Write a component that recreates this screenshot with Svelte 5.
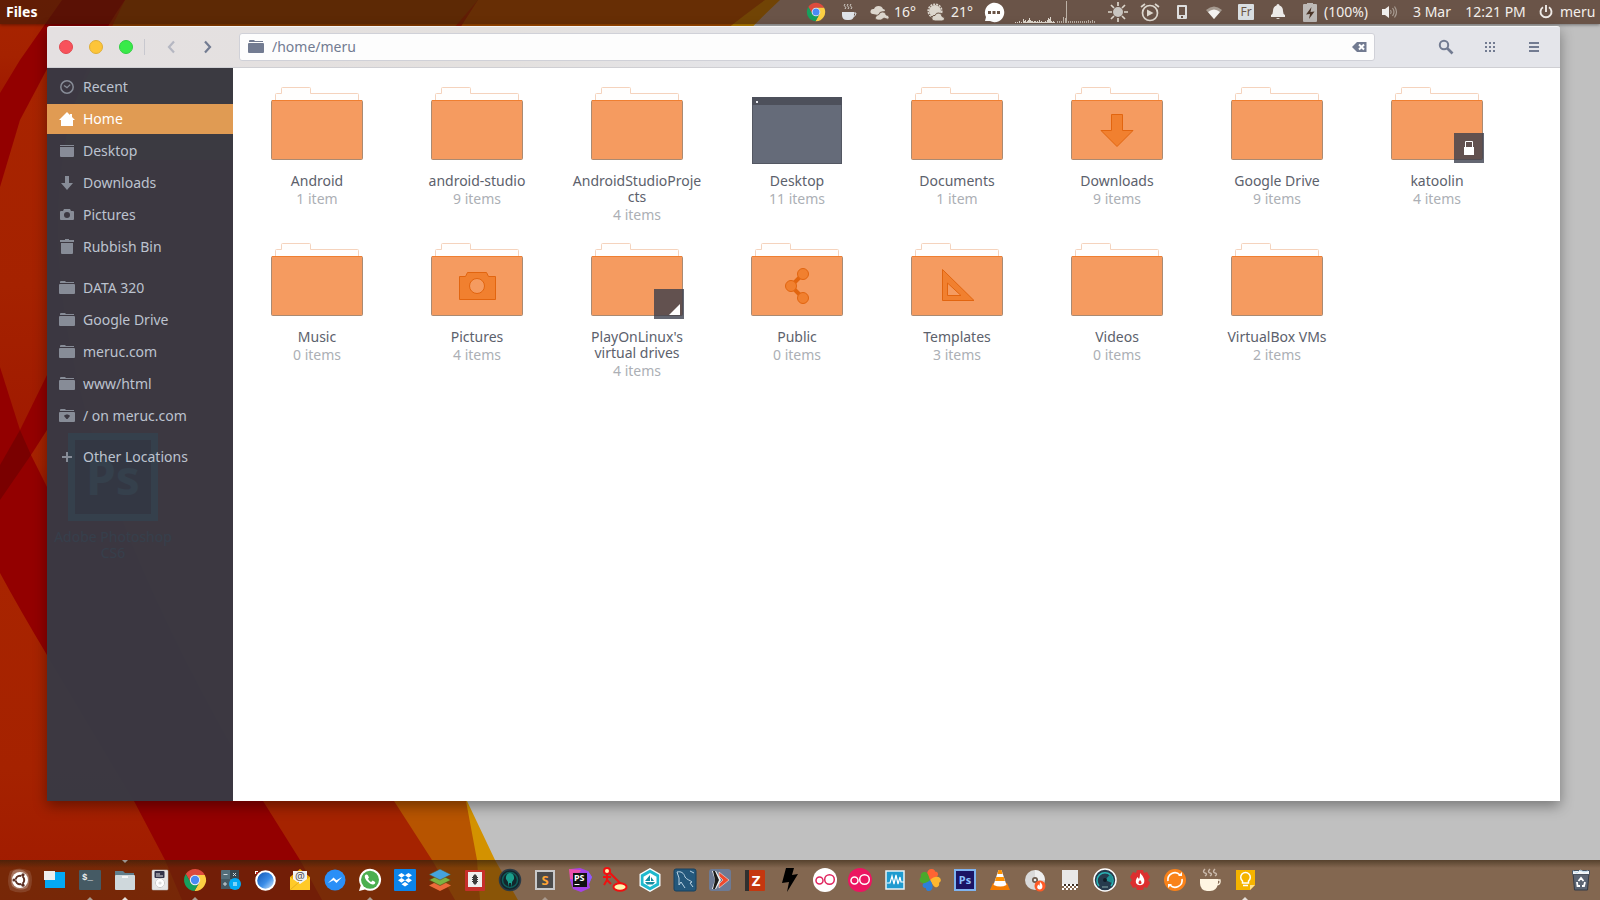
<script>
  const places = [
    [
      { icon: 'recent', label: 'Recent' },
      { icon: 'home', label: 'Home', active: true },
      { icon: 'desktop', label: 'Desktop' },
      { icon: 'download', label: 'Downloads' },
      { icon: 'camera', label: 'Pictures' },
      { icon: 'trash', label: 'Rubbish Bin' }
    ],
    [
      { icon: 'folder', label: 'DATA 320' },
      { icon: 'folder', label: 'Google Drive' },
      { icon: 'folder', label: 'meruc.com' },
      { icon: 'folder', label: 'www/html' },
      { icon: 'remote', label: '/ on meruc.com' }
    ],
    [{ icon: 'plus', label: 'Other Locations' }]
  ];

  const files = [
    { name: 'Android', count: '1 item' },
    { name: 'android-studio', count: '9 items' },
    { name: 'AndroidStudioProjects', count: '4 items' },
    { name: 'Desktop', count: '11 items', kind: 'desktop' },
    { name: 'Documents', count: '1 item' },
    { name: 'Downloads', count: '9 items', kind: 'downloads' },
    { name: 'Google Drive', count: '9 items' },
    { name: 'katoolin', count: '4 items', emblem: 'lock' },
    { name: 'Music', count: '0 items' },
    { name: 'Pictures', count: '4 items', kind: 'pictures' },
    { name: "PlayOnLinux's virtual drives", count: '4 items', emblem: 'link' },
    { name: 'Public', count: '0 items', kind: 'public' },
    { name: 'Templates', count: '3 items', kind: 'templates' },
    { name: 'Videos', count: '0 items' },
    { name: 'VirtualBox VMs', count: '2 items' }
  ];

  const dock = [
    { id: 'ubuntu' }, { id: 'workspaces' }, { id: 'terminal', run: 'idle' }, { id: 'files', run: 'focus' },
    { id: 'ipod' }, { id: 'chrome', run: 'idle' }, { id: 'calculator' }, { id: 'sphere' }, { id: 'mail' },
    { id: 'messenger' }, { id: 'whatsapp', run: 'idle' }, { id: 'dropbox' }, { id: 'layers' }, { id: 'chip' },
    { id: 'kraken' }, { id: 'sublime', run: 'idle' }, { id: 'phpstorm' }, { id: 'stickman' }, { id: 'hexagon' },
    { id: 'mysql' }, { id: 'play' }, { id: 'zotero' }, { id: 'bolt' }, { id: 'flickr' }, { id: 'flickrpink' },
    { id: 'monitor' }, { id: 'pinwheel' }, { id: 'photoshop' }, { id: 'vlc' }, { id: 'burner' },
    { id: 'shredder' }, { id: 'gauge' }, { id: 'firegear' }, { id: 'updater' }, { id: 'coffee' },
    { id: 'keep', run: 'full' }
  ];

  const load = [1, 0, 1, 0, 2, 0, 1, 0, 4, 2, 3, 1, 2, 3, 5, 3, 2, 2, 1, 2, 2, 1, 2, 1, 3, 1, 2, 1, 1, 1, 2, 1, 3, 5, 4, 6, 2, 1, 2, 1,
    0, 0, 2, 0, 2, 0, 2, 0, 6, 0, 5, 22, 0, 2, 0, 2, 0, 2, 0, 2, 0, 2, 0, 2, 0, 2, 0, 2, 0, 2, 0, 2, 0, 3, 0, 2, 0, 3, 0, 2];

  let path = $state('/home/meru');
</script>

{#snippet chrome()}
  <path fill="#dd4b3e" d="M2.8 6A11 11 0 0 1 21.8 7H12A5 5 0 0 0 7.7 14.5z" />
  <path fill="#fccf43" d="M21.8 7A11 11 0 0 1 11.4 23L16.3 14.5A5 5 0 0 0 12 7z" />
  <path fill="#17a05d" d="M11.4 23A11 11 0 0 1 2.8 6L7.7 14.5A5 5 0 0 0 16.3 14.5z" />
  <circle cx="12" cy="12" r="5.2" fill="#f4f4f4" /><circle cx="12" cy="12" r="4.2" fill="#4a8af4" />
{/snippet}

{#snippet place(name)}
  <svg class="i16" viewBox="0 0 16 16" fill="currentColor" aria-hidden="true">
    {#if name === 'recent'}
      <circle cx="8" cy="8" r="6.2" fill="none" stroke="currentColor" stroke-width="1.5" />
      <path d="M5 6.5L8 8.6L11.2 5.6" fill="none" stroke="currentColor" stroke-width="1.3" />
    {:else if name === 'home'}
      <path d="M8 1L11 4V3h2v3l3 3h-2v6H2V9H0z" />
    {:else if name === 'desktop'}
      <path d="M1 3V2h14v1zM1 4h14v9a1 1 0 0 1-1 1H2a1 1 0 0 1-1-1z" />
    {:else if name === 'download'}
      <path d="M6 1h4v7h4l-6 7-6-7h4z" />
    {:else if name === 'camera'}
      <path fill-rule="evenodd" d="M5 2h6l1 2h2a1 1 0 0 1 1 1v7a1 1 0 0 1-1 1H2a1 1 0 0 1-1-1V5a1 1 0 0 1 1-1h2zM8 5a3 3 0 1 0 0 6 3 3 0 0 0 0-6z" />
    {:else if name === 'trash'}
      <path d="M1 1h5V0h4v1h5v2H1zM2 4h12v10a1 1 0 0 1-1 1H3a1 1 0 0 1-1-1z" />
    {:else if name === 'plus'}
      <path d="M7 3h2v4h4v2H9v4H7V9H3V7h4z" />
    {:else}
      <path d="M1 2a1 1 0 0 1 1-1h4l1 1h8v1H1z" />
      {#if name === 'remote'}
        <path fill-rule="evenodd" d="M1 4h14a1 1 0 0 1 1 1v8a1 1 0 0 1-1 1H1a1 1 0 0 1-1-1V5a1 1 0 0 1 1-1zM5 8c1-2 5-2 6 0L8.500 11h-1z" />
      {:else}
        <path d="M1 4h14a1 1 0 0 1 1 1v8a1 1 0 0 1-1 1H1a1 1 0 0 1-1-1V5a1 1 0 0 1 1-1z" />
      {/if}
    {/if}
  </svg>
{/snippet}

{#snippet picture(file)}
  <svg class="picture" viewBox="0 0 96 84" aria-hidden="true">
    {#if file.kind === 'desktop'}
      <rect x="3.500" y="13.500" width="89" height="66" fill="#656b79" stroke="#535762" />
      <path d="M3 13h90v8H3z" fill="#4d505b" /><path d="M7 17h2v2H7z" fill="#e6e8ee" />
    {:else}
      <path d="M6.500 17V10.500q0-1 1-1h5V4.500q0-1 1-1h27q1 0 1 1v5h47q1 0 1 1V17" fill="#fffefd" stroke="#f5d3bd" />
      <rect x="2.500" y="16.500" width="91" height="59" rx="1" fill="#f59b60" stroke="#aa8a72" />
      <path d="M3 16.500h90" stroke="#ef7f31" />
      <g fill="#f1802f" stroke="#e2650f">
        {#if file.kind === 'downloads'}
          <path d="M42.500 30.500h11v16h10.500L48 62.500 32 46.500h10.500z" />
        {:else if file.kind === 'pictures'}
          <path d="M30.500 36.500h6l2-4h19l2 4h7v23h-36z" /><circle cx="48" cy="46" r="7.500" fill="#f59b60" />
        {:else if file.kind === 'public'}
          <path d="M54 34L42 46l12 12" fill="none" stroke-width="4" />
          <circle cx="54" cy="34" r="5.500" /><circle cx="42" cy="46" r="5.500" /><circle cx="54" cy="58" r="5.500" />
        {:else if file.kind === 'templates'}
          <path fill-rule="evenodd" d="M33.500 29.500v31h31.500zM38.500 43v12.500H52z" />
        {/if}
      </g>
    {/if}
    {#if file.emblem}
      <path d="M65 49h30v30H65z" fill="#393c4a" fill-opacity=".78" />
      {#if file.emblem === 'lock'}
        <path d="M75 63h10v8H75z" fill="#fff" /><path d="M76.500 63v-5.500h7V63" fill="none" stroke="#fff" />
      {:else}
        <path d="M91 64v11H80z" fill="#fff" />
      {/if}
    {/if}
  </svg>
{/snippet}

{#snippet app(id)}
  <svg class="i24" viewBox="0 0 24 24" aria-hidden="true">
    {#if id === 'ubuntu'}
      <path d="M2 3q9-5 20 0q4 9 0 19q-9 5-20 0q-4-9 0-19z" fill="#fff" opacity=".12" />
      <path d="M5 3q8-4 15 3q3 7-1 14q-8 4-15-2q-3-8 1-15z" fill="#fff" opacity=".25" />
      <circle cx="12" cy="12" r="8" fill="#fff" />
      <circle cx="12" cy="12" r="4.200" fill="none" stroke="#5b3024" stroke-width="2" />
      <path d="M12 12L6 12M12 12l3-6M12 12l3 6" stroke="#fff" stroke-width="1" />
      <circle cx="6" cy="12" r="1.600" fill="#5b3024" /><circle cx="15" cy="6.800" r="1.600" fill="#5b3024" /><circle cx="15" cy="17.200" r="1.600" fill="#5b3024" />
    {:else if id === 'workspaces'}
      <path d="M2 4h20v16H2z" fill="#03a9f4" /><path d="M1 3h11v9H1z" fill="#eee" />
    {:else if id === 'terminal'}
      <rect x="1" y="2" width="22" height="20" rx="1" fill="#455a64" />
      <text x="4" y="12" font-size="9" font-weight="700" fill="#eee" font-family="Liberation Mono, monospace">$_</text>
    {:else if id === 'files'}
      <path d="M2 3h8l2 2h9v5H2z" fill="#607d8b" /><rect x="2" y="7" width="20" height="15" rx="1" fill="#cfd8dc" /><path d="M9 9h6" stroke="#fff" stroke-width="1.500" />
    {:else if id === 'ipod'}
      <rect x="4" y="2" width="16" height="20" rx="1" fill="#e6e6e6" stroke="#bbb" stroke-width=".5" />
      <rect x="6.500" y="3" width="10" height="7" rx="1" fill="#33344a" /><path d="M8 6h4M8 8h7" stroke="#ddd" stroke-width="1" />
      <circle cx="12" cy="15" r="5" fill="#fff" /><circle cx="12" cy="15" r="4.600" fill="none" stroke="#ccc" /><circle cx="12" cy="15" r="1.600" fill="#ddd" />
    {:else if id === 'chrome'}
      {@render chrome()}
    {:else if id === 'calculator'}
      <rect x="3" y="2" width="18" height="19" rx="1" fill="#546e7a" /><path d="M12 2h9v9h-9z" fill="#37474f" /><path d="M3 11h9v10H3z" fill="#455a64" />
      <path d="M5.500 6.500h4M5 16h4M7 14v4M15 5l3 3M18 5l-3 3" stroke="#cfd8dc" /><circle cx="17" cy="16" r="6" fill="#03a9f4" /><path d="M15 15h4M15 17h4" stroke="#fff" />
    {:else if id === 'sphere'}
      <defs><linearGradient id="sph" x1="0" y1="0" x2="1" y2="1"><stop offset="0" stop-color="#0d4fae" /><stop offset=".55" stop-color="#3b8de8" /><stop offset="1" stop-color="#e8f6ff" /></linearGradient></defs>
      <path d="M2 3h3v3H2z" fill="#fff" /><circle cx="12.500" cy="12.500" r="9.300" fill="url(#sph)" stroke="#fff" stroke-width="2" /><path d="M3 4h2v2H3z" fill="#b71c1c" />
    {:else if id === 'mail'}
      <path d="M2 9l10-8 10 8v13H2z" fill="#f0a800" /><path d="M5 3h14v14H5z" fill="#f2f2f2" />
      <text x="12" y="12" font-size="11" text-anchor="middle" fill="#555" font-family="Noto Sans, sans-serif">@</text>
      <path d="M2 9l10 7 10-7v13H2z" fill="#ffca28" /><path d="M2 22l9-8" stroke="#e6b01e" />
    {:else if id === 'messenger'}
      <circle cx="12" cy="12" r="10.500" fill="#2a8ff7" /><path d="M5 15l5.500-5.500 3 2.800L19 9l-5.500 6-3-2.800z" fill="#fff" />
    {:else if id === 'whatsapp'}
      <path d="M1 23l1.700-5.500A11 11 0 1 1 7 21.500z" fill="#fff" /><circle cx="12" cy="11.800" r="9" fill="#4caf50" />
      <path d="M8 6.500c-2 1-1.500 4 1.500 7s6 4 7.500 2c.8-1.200 0-1.800-2.500-3l-1.300 1.500c-1.500-.6-2.600-1.700-3.200-3.200L11 9.500C10 7 9.500 6 8 6.500z" fill="#fff" />
    {:else if id === 'dropbox'}
      <rect x="1" y="1" width="22" height="22" rx="1" fill="#0a84ea" />
      <path d="M8.500 5l3.500 2.300-3.500 2.400L5 7.300zM15.500 5L19 7.300l-3.500 2.400L12 7.300zM8.500 10L12 12.300l-3.500 2.400L5 12.300zM15.500 10l3.500 2.300-3.500 2.400-3.500-2.400zM12 14l3.500 2.200L12 18.500l-3.500-2.300z" fill="#fff" />
    {:else if id === 'layers'}
      <path d="M12 12l11 5.500L12 23 1 17.500z" fill="#ec6a3a" /><path d="M12 6.500L23 12l-11 5.500L1 12z" fill="#7cb342" stroke="#5b3b10" stroke-width=".6" /><path d="M12 1l11 5.500L12 12 1 6.500z" fill="#45a3dd" stroke="#6b4a12" stroke-width=".6" />
    {:else if id === 'chip'}
      <rect x="2" y="2" width="20" height="21" rx="1" fill="#c62f2b" /><path d="M5 4h14v15H5z" fill="#eee" /><path d="M12 6l2 2v7l-2 2-2-2V8z" fill="#3a3a3a" /><path d="M9 9.500h6M9 11.500h6M9 13.500h6" stroke="#3a3a3a" />
    {:else if id === 'kraken'}
      <circle cx="12" cy="12" r="10.500" fill="#13262c" stroke="#2a3a46" stroke-width="1.500" /><circle cx="12" cy="12" r="7.500" fill="none" stroke="#0f5f5b" stroke-width="1.500" />
      <path d="M12 5c-3 0-4.500 3-4 6l2 3v5l1-4h2l1 4v-5l2-3c.5-3-1-6-4-6z" fill="#1a9f8c" />
    {:else if id === 'sublime'}
      <rect x="3" y="3" width="18" height="18" fill="#4b4b4b" stroke="#c9c9c9" stroke-width="2" />
      <text x="12" y="17" font-size="13" font-weight="700" text-anchor="middle" fill="#ffa534" font-family="Noto Sans, sans-serif">S</text>
    {:else if id === 'phpstorm'}
      <path d="M3 1l9-1 8 3 4 6-3 7 1 4-9 4-8-3-3-9z" fill="#a541e8" /><path d="M1 1l12 1-6 10-5-1z" fill="#ee4fae" /><path d="M20 3l4 6-3 7-3-9z" fill="#8b5cff" />
      <path d="M5 5h14v14H5z" fill="#111" /><text x="6" y="13" font-size="9" font-weight="700" fill="#fff" font-family="Noto Sans, sans-serif">PS</text><path d="M6.500 16.500h5" stroke="#fff" />
    {:else if id === 'stickman'}
      <g stroke="#f01010" stroke-width="2" fill="none"><path d="M4 6v6l-3 5M4 12l4 4M0 9h8M6 4l13 13" /><circle cx="4" cy="3" r="3" fill="#fff4b0" /><ellipse cx="17" cy="19" rx="6.500" ry="3.800" fill="#fff4b0" /></g>
    {:else if id === 'hexagon'}
      <path d="M12 0l10.500 6v12L12 24 1.500 18V6z" fill="#fff" /><path d="M12 1.500l9.200 5.200v10.600L12 22.500l-9.200-5.200V6.700z" fill="#1fb9cd" /><path d="M12 5l6.500 3.700v6.600L12 19l-6.500-3.700V8.700z" fill="#fff" /><path d="M12 7v6H7zM13 9l3 4h-3zM7 14h10l-2 2.500H9z" fill="#138ba0" />
    {:else if id === 'mysql'}
      <rect x="1" y="1" width="22" height="22" rx="2" fill="#24587c" stroke="#17405e" />
      <path d="M4 4c4-1 7 1 8 5 2 3 5 3 7 5l-2 1 3 4M4 4l2 6v7l2-3 4 6M17 3l4 2" fill="none" stroke="#b9d2e2" />
    {:else if id === 'play'}
      <rect x="1" y="1" width="22" height="22" rx="3" fill="#6d7a94" /><path d="M4 3h4l5 9-5 9H4l3-9z" fill="#f3f3f3" /><path d="M5 3h2l4 9-4 9H5l2-9z" fill="#1c1c1c" /><path d="M11 4l10 8-10 8v-4l4-4-4-4z" fill="#f04a2c" stroke="#f6e4e0" stroke-width=".6" />
    {:else if id === 'zotero'}
      <rect x="2" y="2" width="20" height="21" rx="1" fill="#c5370f" /><path d="M2 2h4v21H2z" fill="#30302f" />
      <text x="13" y="18" font-size="15" font-weight="700" text-anchor="middle" fill="#fff" font-family="Noto Sans, sans-serif">Z</text>
    {:else if id === 'bolt'}
      <path d="M8 0h8l-2 7 6-1L9 24l2-10-7 1z" fill="#000" />
    {:else if id === 'flickr' || id === 'flickrpink'}
      <circle cx="12" cy="12" r="12" fill={id === 'flickr' ? '#fff' : '#ec1561'} />
      <g fill="none" stroke={id === 'flickr' ? '#e0245e' : '#fff'} stroke-width="1.500"><circle cx="6.500" cy="12.500" r="3.500" /><circle cx="16.500" cy="11.500" r="4.800" /></g>
    {:else if id === 'monitor'}
      <rect x="3" y="3" width="18" height="18" fill="#1e9bd0" stroke="#e6f3f8" stroke-width="1.500" /><path d="M4 15h3l2-7 2 8 2-9 2 9 2-7 1 5h3" fill="none" stroke="#fff" stroke-width="1.200" />
    {:else if id === 'pinwheel'}
      <path d="M12 12C7 8 9 0 14 1q3 .5 3 2.500 3 0 3 3C20 9 15 11 12 12z" fill="#ff6333" /><path d="M12 12c4-4 8-4 10-2 2 3 0 4-1 5 1 3-2 5-4 4s-4-5-5-7z" fill="#fdb62f" /><path d="M12 12c4 5 3 11-1 11-3 0-3-2-3-3-3 0-4-2-3-4s5-3 7-4z" fill="#2d7fd8" /><path d="M12 12c-4 4-9 4-10 1-1-2 0-3 1-4-1-3 1-5 4-5s4 5 5 8z" fill="#4ba92c" />
    {:else if id === 'photoshop'}
      <rect x="2" y="2" width="20" height="20" fill="#1b1464" stroke="#7fb3f0" stroke-width="2" />
      <text x="12" y="16" font-size="11" font-weight="700" text-anchor="middle" fill="#8cc2ff" font-family="Noto Sans, sans-serif">Ps</text>
    {:else if id === 'vlc'}
      <path d="M5 15h14l3 7H2z" fill="#f57c00" /><path d="M10.500 2h3l5 15q-6 3-13 0z" fill="#fff" /><path d="M10.500 2h3l1 4h-5zM8.300 9h7.400l1.300 4H7z" fill="#ff9100" />
    {:else if id === 'burner'}
      <circle cx="12" cy="12" r="10" fill="#dadada" /><path d="M12 2a10 10 0 0 1 10 10H12z" fill="#efefef" /><circle cx="12" cy="12" r="3" fill="#6c5a4c" /><circle cx="12" cy="12" r="1.300" fill="#eee" />
      <circle cx="17" cy="18" r="5.500" fill="#ff5a26" /><path d="M17 14c3 2 3.500 7 0 7.500-4-.5-3-4-1.500-5l1 1.500z" fill="#fff" />
    {:else if id === 'shredder'}
      <path d="M4 2h16v14H4z" fill="#e8e8e8" /><path d="M4 16h2v2H4zM8 16h2v2H8zM12 16h2v2h-2zM16 16h2v2h-2zM6 18h2v2H6zM10 18h2v2h-2zM14 18h2v2h-2zM18 18h2v2h-2zM4 20h2v2H4zM8 20h2v2H8zM12 20h2v2h-2zM16 20h2v2h-2z" fill="#fff" /><path d="M6 16h2v2H6zM10 16h2v2h-2zM14 16h2v2h-2zM18 16h2v2h-2z" fill="#3c3026" />
    {:else if id === 'gauge'}
      <circle cx="12" cy="12" r="11" fill="#263b4d" stroke="#fff" stroke-width="1.500" /><path d="M6 18A8 8 0 1 1 18 18" fill="none" stroke="#2bb3b5" stroke-width="1.600" />
      <path d="M12 12l5.500-6A8 8 0 0 1 19 15z" fill="#1f8f93" /><circle cx="12" cy="12" r="2" fill="#111c26" /><path d="M9 19h6" stroke="#8aa" />
    {:else if id === 'firegear'}
      <path d="M9 2h6l1 3 3-1 3 5-2 3 2 3-3 5-3-1-1 3H9l-1-3-3 1-3-5 2-3-2-3 3-5 3 1z" fill="#dc2f2f" /><path d="M12 5c4 4 5 7 4 10-2 3-6 3-8 0-.7-3 .5-4 1.500-6l1.500 2c1-2 1-4 1-6zM12 12c-2 2-2 4 0 4s2-2 0-4z" fill="#fff" fill-rule="evenodd" />
    {:else if id === 'updater'}
      <circle cx="12" cy="12" r="11" fill="#f98219" /><path d="M5 13a7 7 0 0 1 12-6M19 11a7 7 0 0 1-12 6" fill="none" stroke="#fff" stroke-width="1.700" /><path d="M15 8h4V4zM9 16H5v4z" fill="#fff" />
    {:else if id === 'coffee'}
      <path d="M7 1q-3 3 0 4t0 3M12 1q-3 3 0 4t0 3M17 1q-3 3 0 4t0 3" fill="none" stroke="#c9b8aa" stroke-width="1.400" />
      <path d="M2 11h18v4q-1 8-8 8H9q-7-1-7-8z" fill="#fff6e3" /><path d="M19 12h3q1 5-4 5" fill="none" stroke="#fff6e3" stroke-width="1.300" />
    {:else if id === 'keep'}
      <path d="M3 2h19v15l-5 5H3z" fill="#f5b400" /><path d="M17 22v-5h5z" fill="#ffe08a" />
      <path d="M9.500 15v-2a4.800 4.800 0 1 1 6 0v2zM10 17.500h5" fill="none" stroke="#fff" stroke-width="1.500" />
    {:else if id === 'bin'}
      <path d="M4 5h16l-1.500 17h-13z" fill="#5b6473" stroke="#353b46" /><path d="M3.500 2.500h17v4h-17z" fill="#f2f5f8" stroke="#4b525e" /><path d="M4 3l4 2 3-3 4 2 4-1" stroke="#b9d8ee" fill="none" />
      <path d="M9.500 13l2.500-3 2.500 3M16 14l-1 4h-2M11 18H8.500l-.5-4" fill="none" stroke="#fff" stroke-width="1.800" />
    {/if}
  </svg>
{/snippet}

<div class="screen">
  <svg class="wallpaper" viewBox="0 0 1600 900" preserveAspectRatio="none" aria-hidden="true">
    <defs>
      <linearGradient id="ember" x1="0" y1="0" x2="0" y2="1"><stop offset="0" stop-color="#a82400" /><stop offset=".6" stop-color="#a52200" /><stop offset="1" stop-color="#a01a00" /></linearGradient>
    </defs>
    <path d="M0 0h1600v900H0z" fill="#c0c0c0" />
    <path d="M0 0h780Q430 330 467 801L495 860 518 900H0z" fill="#d39200" />
    <path d="M0 0h765Q300 340 466 801L477 860 480 900H0z" fill="#b75400" />
    <path d="M0 0h478Q200 420 394 801L432 860 455 900H0z" fill="#a52300" />
    <path d="M125 0h353L340 160H47z" fill="#9c4600" />
    <path d="M0 0h125Q-60 260 263 801L300 860 322 900H0z" fill="#930000" />
    <path d="M0 0h62L20 60 0 93z" fill="url(#ember)" />
    <path d="M0 187L20 120 47 69V375L20 430 0 367z" fill="url(#ember)" />
    <path d="M47 430L31 455 47 487z" fill="url(#ember)" />
    <path d="M20 430L31 455 0 500V465z" fill="#7a0000" />
    <path d="M0 573Q20 610 47 655T134 801L165 860 182 900H0z" fill="url(#ember)" />
  </svg>

  <div class="shortcut" aria-hidden="true">
    <span class="logo">Ps</span>
    <span>Adobe Photoshop CS6</span>
  </div>

  <header class="panel">
    <strong class="appname">Files</strong>
    <div class="tray">
      <button class="cell" aria-label="Chrome"><svg class="i20" viewBox="0 0 24 24">{@render chrome()}</svg></button>
      <button class="cell wide" aria-label="Caffeine">
        <svg class="i16" viewBox="0 0 16 16"><path d="M4 0q-1.500 1.500 0 2.500T4 5M7 0q-1.500 1.500 0 2.500T7 5M10 0q-1.500 1.500 0 2.500T10 5" fill="none" stroke="#d8d4ce" /><path d="M1 8h12v3q0 5-5 5H6q-5 0-5-5z" fill="#dfe3e8" /><path d="M13 9h2q0 3-3 4" fill="none" stroke="#dfe3e8" /></svg>
      </button>
      <button class="weather">
        <svg class="i20" viewBox="0 0 20 20" fill="#dcd6cd"><path d="M3 12q-3-.5-2.500-3T4 7q1-3 4.500-3T13 7q2 0 2 2l-5 1-2 3z" /><path d="M8 18q-3 0-2.500-2.500T9 12.500q1-3 4-2.500t3 3q3 0 3 2.500T17 17l-3-1-3 2z" stroke="#685244" stroke-width=".7" /></svg>16°
      </button>
      <button class="weather">
        <svg class="i20" viewBox="0 0 20 20" fill="#dcd6cd"><circle cx="8" cy="9" r="6" /><circle cx="8" cy="9" r="6.800" fill="none" stroke="#dcd6cd" stroke-width="1.600" stroke-dasharray="2 1" /><path d="M8 19q-4-.5-3-3.500T8 13.500q1-3 4-2.500t3 3.500q3 .5 2.500 2.500T15 19z" stroke="#685244" /></svg>21°
      </button>
      <button class="cell chat" aria-label="Messages">
        <svg class="i20" viewBox="0 0 20 20"><path d="M1 19l1-4A9.700 9.700 0 1 1 6 19z" fill="#fff" /><path d="M4 9h3v3H4zM8.500 9h3v3h-3zM13 9h3v3h-3z" fill="#685244" /></svg>
      </button>
      <button class="cell load" aria-label="System load">
        <svg class="graph" viewBox="0 0 80 22" fill="#e0d9cf">{#each load as h, x}<rect {x} y={22 - h} width="1" height={h} opacity={x > 40 ? 0.7 : 1} />{/each}</svg>
      </button>
      <button class="cell" aria-label="Brightness">
        <svg class="i20" viewBox="0 0 20 20"><circle cx="10" cy="10" r="5" fill="#c9c5c0" /><path d="M10 0v4M10 16v4M0 10h4M16 10h4M3 3l3 3M14 14l3 3M17 3l-3 3M6 14l-3 3" stroke="#ddd6cc" stroke-width="1.700" /></svg>
      </button>
      <button class="cell" aria-label="Alarm">
        <svg class="i20" viewBox="0 0 20 20"><circle cx="10" cy="11" r="7.500" fill="none" stroke="#dcd6cd" stroke-width="1.700" /><path d="M7 7.500l6.500 3.500L7 14.500z" fill="#dcd6cd" /><path d="M1 5l4-3M19 5l-4-3" stroke="#dcd6cd" stroke-width="1.700" /></svg>
      </button>
      <button class="cell" aria-label="Phone">
        <svg class="i16" viewBox="0 0 16 16"><path fill-rule="evenodd" d="M4 1h8a1 1 0 0 1 1 1v12a1 1 0 0 1-1 1H4a1 1 0 0 1-1-1V2a1 1 0 0 1 1-1zM5 3v8h6V3zM7 12v2h2v-2z" fill="#dedede" /></svg>
      </button>
      <button class="cell" aria-label="Wi-Fi">
        <svg class="i16" viewBox="0 0 16 16"><path d="M0 6q8-7 16 0l-8 9z" fill="#a59a90" /><path d="M2 8q6-5 12 0l-6 7z" fill="#f4f2f0" /></svg>
      </button>
      <button class="cell"><span class="lang">Fr</span></button>
      <button class="cell" aria-label="Notifications">
        <svg class="i16" viewBox="0 0 16 16"><path d="M8 0q1.500 0 1.500 1.500Q13 2.500 13 7q0 3 2 4v2H1v-2q2-1 2-4 0-4.500 3.500-5.500Q6.500 0 8 0zM6 14h4q-2 2-4 0z" fill="#eceae8" /></svg>
      </button>
      <button class="battery">
        <svg class="i16 tall" viewBox="0 0 16 20"><path d="M5 1h6v1h3q1 0 1 1v16q0 1-1 1H2q-1 0-1-1V3q0-1 1-1h3z" fill="#bdb9b6" /><path d="M9.500 5l-1 5 4-.5L7 17l1-5-4 .5z" fill="#4b3528" /></svg>(100%)
      </button>
      <button class="cell volume" aria-label="Volume">
        <svg class="i16" viewBox="0 0 16 16"><path d="M1 5h3l4-3v12l-4-3H1z" fill="#f0eeec" /><path d="M9.500 6q1.500 2 0 4M11.500 4q3 4 0 8M13.500 2.500q4 5.500 0 11" fill="none" stroke="#a99d93" stroke-width="1.200" /></svg>
      </button>
      <button class="cell date">3 Mar</button>
      <button class="cell time">12:21 PM</button>
      <button class="user">
        <svg class="i16" viewBox="0 0 16 16"><path d="M5 3.200a5.500 5.500 0 1 0 6 0M8 1v7" fill="none" stroke="#eeeae6" stroke-width="1.900" /></svg>meru
      </button>
    </div>
  </header>

  <main class="stage">
    <section class="window">
      <div class="titlebar">
        <div class="lights">
          <button class="light close" aria-label="Close"></button>
          <button class="light minimise" aria-label="Minimise"></button>
          <button class="light maximise" aria-label="Maximise"></button>
        </div>
        <span class="rule"></span>
        <button class="nav dim" aria-label="Back"><svg class="i16" viewBox="0 0 16 16"><path d="M11 2.500L6 8l5 5.500" fill="none" stroke="currentColor" stroke-width="2.200" /></svg></button>
        <button class="nav" aria-label="Forward"><svg class="i16" viewBox="0 0 16 16"><path d="M6 2.500L11 8l-5 5.500" fill="none" stroke="currentColor" stroke-width="2.200" /></svg></button>
        <div class="path">
          <label for="location" aria-label="Location">{@render place('folder')}</label>
          <input id="location" type="text" bind:value={path} />
          <button class="clear" aria-label="Clear" onclick={() => (path = '')}><svg class="i16" viewBox="0 0 16 16"><path fill="currentColor" d="M1 8l5-5h9.500v10H6z" /><path d="M8 5.500l5 5M13 5.500l-5 5" stroke="#fff" stroke-width="2" /></svg></button>
        </div>
        <div class="tools">
          <button aria-label="Search"><svg class="i16" viewBox="0 0 16 16"><circle cx="6" cy="6" r="4.200" fill="none" stroke="currentColor" stroke-width="2" /><path d="M9 9l5.500 5.500" stroke="currentColor" stroke-width="2.600" /></svg></button>
          <button aria-label="Icon view"><svg class="i16" viewBox="0 0 16 16" fill="currentColor">{#each [3, 7, 11] as y}{#each [3, 7, 11] as x}<rect {x} {y} width="2" height="2" />{/each}{/each}</svg></button>
          <button aria-label="Menu"><svg class="i16" viewBox="0 0 16 16"><path d="M3 3h10v2H3zM3 7h10v2H3zM3 11h10v2H3z" fill="currentColor" /></svg></button>
        </div>
      </div>

      <div class="body">
        <nav class="sidebar">
          {#each places as group}
            <ul>
              {#each group as item}
                <li><button class="place" class:active={item.active}>{@render place(item.icon)}<span>{item.label}</span></button></li>
              {/each}
            </ul>
          {/each}
        </nav>

        <div class="files">
          {#each files as file}
            <button class="file">
              {@render picture(file)}
              <span class="name">{file.name}</span>
              <span class="count">{file.count}</span>
            </button>
          {/each}
        </div>
      </div>
    </section>
  </main>

  <footer class="dock">
    {#each dock as item}
      <button class="launcher" aria-label={item.id}>
        {@render app(item.id)}
        {#if item.run === 'focus'}<span class="notch"></span>{/if}
        {#if item.run}<span class="mark" class:solid={item.run !== 'idle'}></span>{/if}
      </button>
    {/each}
    <button class="launcher bin" aria-label="bin">{@render app('bin')}</button>
  </footer>
</div>

<style>
  :global(body) { margin: 0; }
  * { box-sizing: border-box; }
  .screen {
    position: relative;
    display: flex;
    flex-direction: column;
    min-height: 100vh;
    overflow: hidden;
    font-family: 'Noto Sans', 'Open Sans', sans-serif;
    font-size: 14px;
    line-height: 16px;
  }
  button {
    display: flex;
    align-items: center;
    justify-content: center;
    margin: 0;
    padding: 0;
    border: 0;
    background: none;
    color: inherit;
    font: inherit;
  }
  svg { display: block; flex: none; overflow: visible; }
  .i16 { width: 16px; height: 16px; }
  .i16.tall { height: 20px; }
  .i20 { width: 20px; height: 20px; }
  .i24 { width: 24px; height: 24px; }
  .wallpaper { position: absolute; inset: 0; width: 100%; height: 100%; }

  .shortcut {
    position: absolute;
    left: 53px;
    top: 433px;
    display: flex;
    flex-direction: column;
    align-items: center;
    gap: 8px;
    width: 120px;
    color: #4098c8;
    text-align: center;
  }
  .logo {
    width: 90px;
    height: 88px;
    border: 7px solid #2aa5d8;
    background: #0a1030;
    color: #2aa5d8;
    font-size: 48px;
    font-weight: 700;
    line-height: 74px;
  }

  .panel {
    position: relative;
    display: flex;
    align-items: center;
    justify-content: space-between;
    height: 24px;
    padding-left: 6px;
    background: rgba(60, 26, 8, 0.65);
    color: #f3efeb;
    box-shadow: 0 1px 3px rgba(0, 0, 0, 0.4);
  }
  .appname { color: #fff; }
  .tray { display: flex; height: 24px; }
  .cell { width: 32px; }
  .wide { width: 34px; }
  .weather { justify-content: flex-start; gap: 4px; width: 57px; padding-left: 4px; }
  .chat { width: 28px; }
  .load { width: 94px; }
  .graph { width: 80px; height: 22px; }
  .battery { justify-content: flex-start; gap: 6px; width: 82px; padding-left: 8px; }
  .volume { width: 26px; }
  .date { width: 60px; }
  .time { width: 67px; }
  .user { justify-content: flex-start; gap: 6px; width: 71px; padding-left: 9px; }
  .lang { width: 16px; height: 16px; border-radius: 1px; background: #dadfe2; color: #6c5747; font-size: 12px; }

  .stage { position: relative; display: flex; flex: 1; padding: 2px 40px 59px 47px; }
  .window {
    display: flex;
    flex: 1;
    flex-direction: column;
    min-width: 0;
    border-radius: 3px 3px 0 0;
    box-shadow: 0 5px 14px rgba(0, 0, 0, 0.38);
  }
  .titlebar {
    display: flex;
    align-items: center;
    height: 42px;
    padding: 0 4px 0 12px;
    border-top: 1px solid #f6f6f7;
    border-bottom: 1px solid #cfcfd3;
    border-radius: 3px 3px 0 0;
    background: linear-gradient(90deg, #e4e0e1, #e4e1df 30%, #e4e5ea 50%);
    color: #727b91;
  }
  .lights { display: flex; gap: 16px; }
  .light { width: 14px; height: 14px; border-radius: 50%; }
  .close { border: 1px solid #e2484f; background: #f8525b; }
  .minimise { border: 1px solid #dfae38; background: #fdc539; }
  .maximise { border: 1px solid #30cf43; background: #39ea49; }
  .rule { width: 1px; height: 16px; margin: 0 8px 0 11px; background: #c8c8cf; }
  .nav { width: 36px; height: 28px; }
  .dim { color: #b5b7c2; }
  .path {
    display: flex;
    flex: 1;
    align-items: center;
    gap: 8px;
    height: 28px;
    margin: 0 49px 0 14px;
    padding: 0 7px 0 8px;
    border: 1px solid #d0d1d8;
    border-radius: 3px;
    background: #fdfdfd;
  }
  .path input { flex: 1; min-width: 0; padding: 0; border: 0; outline: 0; background: none; color: #727b91; font: inherit; }
  .tools { display: flex; }
  .tools button { width: 44px; height: 28px; }

  .body { display: flex; flex: 1; }
  .sidebar {
    display: flex;
    flex: none;
    flex-direction: column;
    gap: 11px;
    width: 186px;
    padding-top: 4px;
    background: rgba(54, 58, 69, 0.95);
    color: #bcc3cf;
  }
  ul { display: flex; flex-direction: column; gap: 2px; margin: 0; padding: 0; list-style: none; }
  .place { justify-content: flex-start; gap: 8px; width: 100%; height: 30px; padding-left: 12px; }
  .place :global(svg) { color: #878c97; }
  .active { background: #e09b53; color: #fff; }
  .active :global(svg) { color: #fff; }

  .files {
    display: grid;
    flex: 1;
    grid-template-columns: repeat(auto-fill, 160px);
    grid-auto-rows: 156px;
    align-content: start;
    padding: 16px 0 0 4px;
    background: #fff;
  }
  .file { flex-direction: column; justify-content: flex-start; }
  .picture { width: 96px; height: 84px; }
  .name { max-width: 132px; margin-top: 5px; color: #5c616c; overflow-wrap: anywhere; }
  .count { margin-top: 2px; color: #acafb5; }

  .dock {
    position: relative;
    display: flex;
    height: 40px;
    padding: 0 2px;
    background: linear-gradient(rgba(40, 28, 10, 0.5), transparent 8px), rgba(93, 48, 12, 0.62);
  }
  .launcher { position: relative; width: 35px; height: 40px; }
  .bin { margin-left: auto; }
  .notch { position: absolute; top: 0; left: 15px; border: 3px solid transparent; border-top-color: #9a9490; border-bottom: 0; }
  .mark { position: absolute; bottom: 0; left: 15px; border: 3px solid transparent; border-bottom-color: #a99a8e; border-top: 0; }
  .solid { border-bottom-color: #e6e0da; }
</style>
